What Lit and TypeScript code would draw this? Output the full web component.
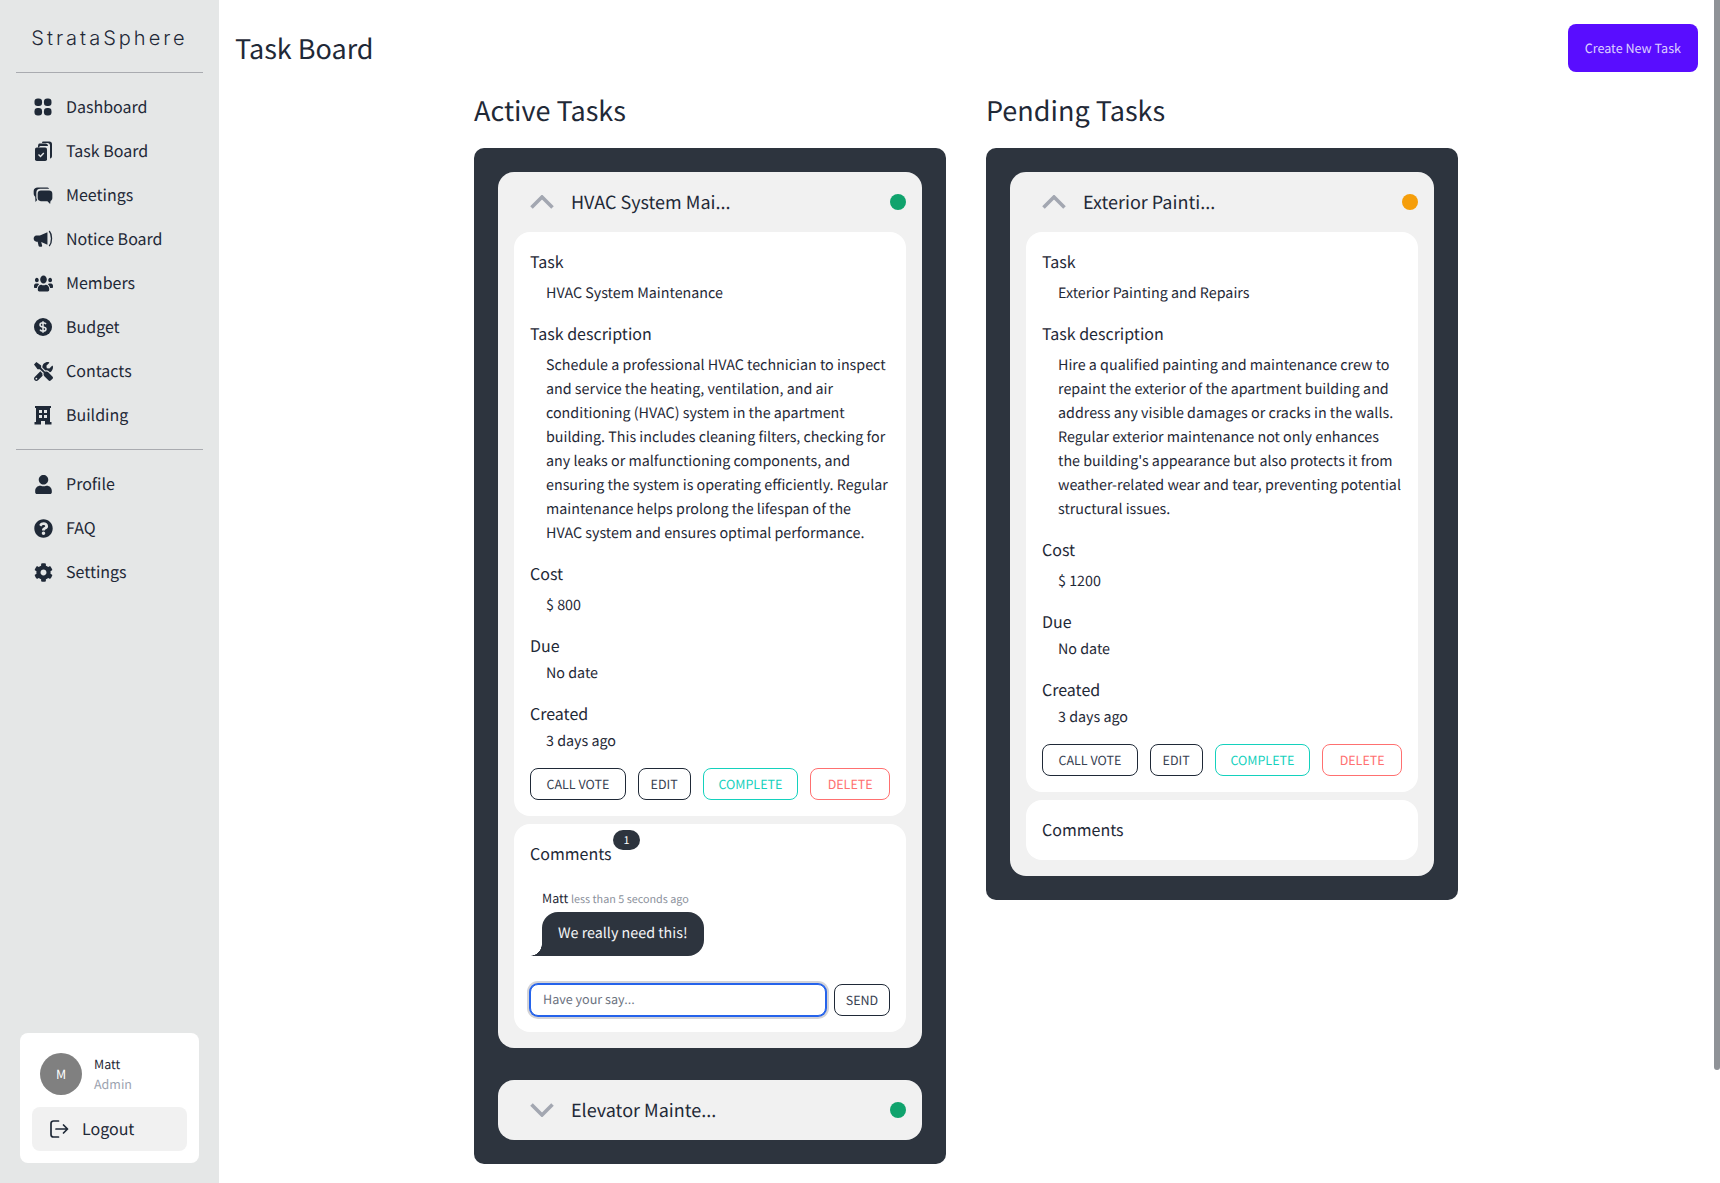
import { css, html, LitElement, svg } from 'lit'
import { customElement, property } from 'lit/decorators.js'

const SIDE_BG = '#e5e7e7'

const icons: Record<string, unknown> = {
  dashboard: html`<svg viewBox="-0.700 -0.700 25.400 25.400"><rect x="3" y="3" width="8" height="8" rx="3.400"/><rect x="13" y="3" width="8" height="8" rx="3.400"/><rect x="3" y="13" width="8" height="8" rx="3.400"/><rect x="13" y="13" width="8" height="8" rx="3.400"/></svg>`,
  tasks: html`<svg viewBox="0 0 24 24"><path d="M12 2.500h6.500c1.500 0 2.500 1 2.500 2.500v12c0 1.300-.7 2.300-2 2.500V6.500c0-1.500-1-2.500-2.500-2.500H11c.1-.8.4-1.500 1-1.500z"/><path d="M8.500 4.500h6c1.500 0 2.500 1 2.500 2.500H10c-1 0-2 .5-2 1.500H7c0-2 .2-4 1.500-4z"/><rect x="4" y="8.500" width="12" height="13.500" rx="1.800"/><path d="M7.500 15.500l2 2 3.300-3.500" fill="none" stroke=${SIDE_BG} stroke-width="1.400"/></svg>`,
  meetings: html`<svg viewBox="-1.500 -1.500 27 27"><path d="M6 3.500h10c1.400 0 2.500.6 3 1.500H9c-3 0-4.500 1.800-4.500 4.500v5c0 1.300.3 2.400 1 3.200L3.500 20l-.3-6C2 13 1.500 11.500 1.500 10V7.500c0-2.500 2-4 4.500-4z"/><path d="M9.500 7h9.500c2 0 3.500 1.300 3.500 3.500v5c0 1.500-.8 2.800-2 3.300l-.5 3.200-3-3H9.500C7.500 19 6 17.500 6 15.500v-5C6 8.300 7.500 7 9.500 7z"/></svg>`,
  notice: html`<svg viewBox="-1.500 -1.500 27 27"><path d="M17 4.500L8.500 8H4.500C2.800 8 1.500 9.500 1.500 11.500S2.800 15 4.500 15H6l1 4.500c.2.800.7 1.200 1.500 1.200h1.500c.8 0 1.200-.7 1-1.400L10 15.500l7 3z"/><path d="M19 3c1.800 2 2.600 5.300 2.600 8.500S20.800 18 19 20" fill="none" stroke="currentColor" stroke-width="1.500"/></svg>`,
  members: html`<svg class="stretched" viewBox="0 20 640 472" preserveAspectRatio="none"><path d="M96 224c35.300 0 64-28.700 64-64s-28.700-64-64-64-64 28.700-64 64 28.700 64 64 64zm448 0c35.300 0 64-28.700 64-64s-28.700-64-64-64-64 28.700-64 64 28.700 64 64 64zm32 32h-64c-17.600 0-33.500 7.100-45.100 18.600 40.300 22.100 68.900 62 75.100 109.400h66c17.700 0 32-14.300 32-32v-32c0-35.300-28.700-64-64-64zm-256 0c61.900 0 112-50.100 112-112S381.900 32 320 32 208 82.100 208 144s50.100 112 112 112zm76.800 32h-8.300c-20.800 10-43.900 16-68.500 16s-47.600-6-68.500-16h-8.300C179.600 288 128 339.600 128 403.200V432c0 26.500 21.500 48 48 48h288c26.500 0 48-21.500 48-48v-28.800c0-63.600-51.600-115.200-115.200-115.200zm-223.700-13.400C161.500 263.100 145.600 256 128 256H64c-35.300 0-64 28.700-64 64v32c0 17.700 14.300 32 32 32h65.900c6.300-47.400 34.900-87.300 75.200-109.400z"/></svg>`,
  budget: html`<svg viewBox="0 0 24 24"><circle cx="12" cy="12" r="9"/><path d="M15 9.200c-.5-1-1.600-1.400-3-1.400-1.700 0-3 .8-3 2.100 0 2.900 6 1.400 6 4.200 0 1.300-1.300 2.100-3 2.100-1.400 0-2.500-.5-3-1.500M12 6.200v11.600" fill="none" stroke=${SIDE_BG} stroke-width="1.500"/></svg>`,
  contacts: html`<svg viewBox="0 0 512 512"><path d="M501.100 395.700L384 278.600c-23.100-23.100-57.600-27.600-85.400-13.900L192 158.100V96L64 0 0 64l96 128h62.100l106.600 106.600c-13.600 27.800-9.200 62.300 13.900 85.400l117.100 117.100c14.600 14.600 38.200 14.600 52.700 0l52.700-52.700c14.500-14.600 14.500-38.200 0-52.700zM331.700 225c28.300 0 54.900 11 74.900 31l19.400 19.400c15.800-6.900 30.800-16.500 43.800-29.500 37.100-37.100 49.700-89.300 37.900-136.700-2.200-9-13.500-12.100-20.100-5.500l-74.400 74.400-67.900-11.300L334 98.900l74.400-74.400c6.600-6.600 3.400-17.900-5.700-20.200-47.400-11.700-99.600.9-136.600 37.900-28.500 28.500-41.900 66.100-41.200 103.600l82.100 82.100c8.100-1.900 16.500-2.900 24.700-2.900zm-103.900 82l-56.700-56.700L18.700 402.800c-25 25-25 65.500 0 90.500s65.500 25 90.500 0l123.600-123.600c-7.600-19.900-9.900-41.600-5-62.700zM64 472c-13.200 0-24-10.800-24-24 0-13.300 10.700-24 24-24s24 10.700 24 24c0 13.200-10.700 24-24 24z"/></svg>`,
  building: html`<svg viewBox="0 0 24 24"><path fill-rule="evenodd" d="M4 3h16v2h-1v14h1.500v2.500H14V18h-4v3.500H3.500V19H5V5H4zM8 7v3h3V7zm5 0v3h3V7zM8 12v3h3v-3zm5 0v3h3v-3z"/></svg>`,
  profile: html`<svg viewBox="0 0 448 512"><path d="M224 256c70.700 0 128-57.300 128-128S294.700 0 224 0 96 57.300 96 128s57.300 128 128 128zm89.600 32h-16.700c-22.200 10.200-46.900 16-72.900 16s-50.600-5.800-72.900-16h-16.700C60.200 288 0 348.200 0 422.400V464c0 26.500 21.500 48 48 48h352c26.500 0 48-21.500 48-48v-41.600c0-74.200-60.200-134.400-134.400-134.400z"/></svg>`,
  faq: html`<svg viewBox="0 0 512 512"><path d="M504 256c0 136.997-111.043 248-248 248S8 392.997 8 256C8 119.083 119.043 8 256 8s248 111.083 248 248zM262.655 90c-54.497 0-89.255 22.957-116.549 63.758-3.536 5.286-2.353 12.415 2.715 16.258l34.699 26.310c5.205 3.947 12.621 3.008 16.665-2.122 17.864-22.658 30.113-35.797 57.303-35.797 20.429 0 45.698 13.148 45.698 32.958 0 14.976-12.363 22.667-32.534 33.976C247.128 238.528 216 254.941 216 296v4c0 6.627 5.373 12 12 12h56c6.627 0 12-5.373 12-12v-1.333c0-28.462 83.186-29.647 83.186-106.667 0-58.002-60.165-102-116.531-102zM256 338c-25.365 0-46 20.635-46 46 0 25.364 20.635 46 46 46s46-20.636 46-46c0-25.365-20.635-46-46-46z"/></svg>`,
  settings: html`<svg viewBox="0 0 512 512"><path d="M487.400 315.700l-42.600-24.600c4.300-23.200 4.300-47 0-70.200l42.600-24.600c4.900-2.800 7.100-8.600 5.500-14-11.100-35.600-30-67.800-54.700-94.600-3.800-4.100-10-5.100-14.800-2.300L380.800 110c-17.900-15.400-38.500-27.300-60.800-35.100V25.800c0-5.600-3.900-10.500-9.400-11.700-36.700-8.200-74.300-7.800-109.200 0-5.500 1.200-9.400 6.100-9.400 11.700V75c-22.200 7.900-42.800 19.800-60.800 35.100L88.700 85.500c-4.900-2.800-11-1.900-14.800 2.300-24.700 26.700-43.600 58.900-54.700 94.600-1.700 5.400.6 11.200 5.500 14L67.300 221c-4.300 23.200-4.300 47 0 70.200l-42.600 24.600c-4.900 2.800-7.100 8.600-5.500 14 11.100 35.600 30 67.800 54.700 94.600 3.800 4.100 10 5.100 14.800 2.300l42.600-24.600c17.900 15.400 38.500 27.300 60.800 35.100v49.200c0 5.600 3.900 10.500 9.400 11.700 36.700 8.200 74.300 7.800 109.200 0 5.500-1.200 9.400-6.100 9.400-11.700v-49.200c22.200-7.900 42.800-19.800 60.800-35.100l42.600 24.600c4.900 2.800 11 1.900 14.800-2.300 24.700-26.700 43.600-58.900 54.700-94.600 1.500-5.500-.7-11.300-5.600-14.100zM256 336c-44.100 0-80-35.900-80-80s35.900-80 80-80 80 35.900 80 80-35.900 80-80 80z"/></svg>`,
}

const chevron = (open: boolean) => html`<svg class="chevron" viewBox="0 0 24 14">
  ${svg`<path d=${open ? 'M1.500 12.500L12 2l10.500 10.500' : 'M1.500 1.500L12 12 22.500 1.500'} fill="none" stroke="#a3a7b1" stroke-width="3.600"/>`}
</svg>`

const logoutIcon = html`<svg class="logout-icon" viewBox="0 0 20 20" fill="none" stroke="currentColor" stroke-width="1.700" stroke-linecap="round" stroke-linejoin="round">
  <path d="M9.500 2H4.500C3 2 2 3 2 4.500v11C2 17 3 18 4.500 18h5"/><path d="M7 10h11.500M14.500 6l4 4-4 4"/>
</svg>`

type Field = { label: string; value: string; tight?: boolean }
type Task = {
  title: string
  short: string
  color: string
  description?: string
  cost?: string
  comments?: { name: string; when: string; text: string }[]
}

const topLinks = [
  ['dashboard', 'Dashboard'],
  ['tasks', 'Task Board'],
  ['meetings', 'Meetings'],
  ['notice', 'Notice Board'],
  ['members', 'Members'],
  ['budget', 'Budget'],
  ['contacts', 'Contacts'],
  ['building', 'Building'],
]
const bottomLinks = [
  ['profile', 'Profile'],
  ['faq', 'FAQ'],
  ['settings', 'Settings'],
]

const activeTasks: Task[] = [
  {
    title: 'HVAC System Maintenance',
    short: 'HVAC System Mai...',
    color: '#10a36d',
    description:
      'Schedule a professional HVAC technician to inspect and service the heating, ventilation, and air conditioning (HVAC) system in the apartment building. This includes cleaning filters, checking for any leaks or malfunctioning components, and ensuring the system is operating efficiently. Regular maintenance helps prolong the lifespan of the HVAC system and ensures optimal performance.',
    cost: '$ 800',
    comments: [{ name: 'Matt', when: 'less than 5 seconds ago', text: 'We really need this!' }],
  },
  { title: 'Elevator Maintenance', short: 'Elevator Mainte...', color: '#10a36d' },
]

const pendingTasks: Task[] = [
  {
    title: 'Exterior Painting and Repairs',
    short: 'Exterior Painti...',
    color: '#f59e0b',
    description:
      "Hire a qualified painting and maintenance crew to repaint the exterior of the apartment building and address any visible damages or cracks in the walls. Regular exterior maintenance not only enhances the building's appearance but also protects it from weather-related wear and tear, preventing potential structural issues.",
    cost: '$ 1200',
  },
]

@customElement('task-card')
class TaskCard extends LitElement {
  static styles = css`
    :host {
      display: block;
    }
    .card {
      background: #f1f1f1;
      border-radius: 16px;
    }
    .head {
      height: 60px;
      display: flex;
      align-items: center;
      padding: 0 16px 0 32px;
    }
    .chevron {
      width: 24px;
      height: 14px;
      flex: none;
    }
    .title {
      flex: 1;
      margin-left: 17px;
      font-size: 18px;
      line-height: 28px;
    }
    .dot {
      width: 16px;
      height: 16px;
      border-radius: 50%;
    }
    .body {
      padding: 0 16px 16px;
      display: flex;
      flex-direction: column;
      gap: 8px;
    }
    .panel {
      background: #fff;
      border-radius: 16px;
      padding: 16px;
    }
    .label {
      font-size: 16px;
      line-height: 26px;
    }
    .value {
      font-size: 14.300px;
      line-height: 24px;
      padding-left: 16px;
      margin: 7px 0 15px;
    }
    .value.tight {
      margin-top: 3px;
    }
    .actions {
      display: flex;
      gap: 12px;
    }
    button {
      height: 32px;
      box-sizing: border-box;
      padding: 0 0 2px;
      background: #fff;
      border: 1px solid #1f2937;
      border-radius: 8px;
      color: #374151;
      font: inherit;
      font-size: 12.500px;
      text-rendering: inherit;
      text-transform: uppercase;
      white-space: nowrap;
    }
    button.vote,
    button.complete {
      width: 96px;
    }
    button.edit {
      width: 53px;
    }
    button.complete {
      border-color: #14d1bd;
      color: #14d1bd;
    }
    button.delete {
      width: 80px;
      border-color: #ff7070;
      color: #ff7070;
    }
    .comments-label {
      display: inline-block;
      position: relative;
      margin-bottom: 2px;
    }
    .badge {
      position: absolute;
      left: 83px;
      top: -10px;
      width: 27px;
      height: 20px;
      border-radius: 10px;
      background: #2d343e;
      color: #fff;
      font-size: 10.800px;
      line-height: 20px;
      text-align: center;
    }
    .meta {
      margin: 20px 0 0 12px;
      font-size: 12.500px;
      line-height: 20px;
    }
    .meta span {
      color: #8b919c;
      font-size: 10.800px;
    }
    .bubble {
      position: relative;
      display: inline-block;
      margin: 3px 0 0 12px;
      padding: 9px 16px 11px;
      background: #2d343e;
      color: #f3f4f6;
      border-radius: 16px 16px 16px 0;
      font-size: 14.300px;
      line-height: 24px;
    }
    .bubble::before {
      content: '';
      position: absolute;
      left: -12px;
      bottom: 0;
      width: 12px;
      height: 12px;
      background: radial-gradient(circle at 0 0, transparent 11.500px, #2d343e 12px);
    }
    .say {
      display: flex;
      gap: 8px;
      margin-top: 28px;
    }
    input {
      flex: 1;
      min-width: 0;
      height: 32px;
      box-sizing: border-box;
      padding: 0 12px 4px;
      border: 1px solid #2563eb;
      border-radius: 8px;
      box-shadow: 0 0 0 1px #2563eb, 0 0 0 3px #d4d4d8;
      outline: none;
      color: #1f2937;
      font: inherit;
      font-size: 12.600px;
      text-rendering: inherit;
    }
    input::placeholder {
      color: #6b7280;
    }
    .say button {
      width: 56px;
    }
  `

  @property({ attribute: false }) task!: Task

  render() {
    const t = this.task
    const open = !!t.description
    return html`
      <div class="card">
        <div class="head">
          ${chevron(open)}
          <div class="title">${t.short}</div>
          <div class="dot" style="background: ${t.color}"></div>
        </div>
        ${open ? this.renderBody(t) : ''}
      </div>
    `
  }

  renderBody(t: Task) {
    const fields: Field[] = [
      { label: 'Task', value: t.title },
      { label: 'Task description', value: t.description! },
      { label: 'Cost', value: t.cost! },
      { label: 'Due', value: 'No date', tight: true },
      { label: 'Created', value: '3 days ago', tight: true },
    ]
    const comments = t.comments || []
    return html`
      <div class="body">
        <div class="panel">
          ${fields.map(
            (f) => html`
              <div class="label">${f.label}</div>
              <div class="value ${f.tight ? 'tight' : ''}">${f.value}</div>
            `
          )}
          <div class="actions">
            <button class="vote">Call vote</button>
            <button class="edit">Edit</button>
            <button class="complete">Complete</button>
            <button class="delete">Delete</button>
          </div>
        </div>
        <div class="panel">
          <div class="label comments-label">
            Comments ${comments.length ? html`<span class="badge">${comments.length}</span>` : ''}
          </div>
          ${comments.map(
            (c) => html`
              <div class="meta">${c.name} <span>${c.when}</span></div>
              <div class="bubble">${c.text}</div>
              <div class="say">
                <input placeholder="Have your say..." />
                <button>Send</button>
              </div>
            `
          )}
        </div>
      </div>
    `
  }
}

@customElement('app-root')
export class AppRoot extends LitElement {
  static styles = css`
    :host {
      display: flex;
      position: relative;
      height: 100vh;
      overflow: hidden;
      background: #fff;
      color: #1f2937;
      font-family: 'Noto Sans CJK JP', 'Noto Sans', sans-serif;
      text-rendering: geometricPrecision;
    }
    .side {
      width: 219px;
      flex: none;
      box-sizing: border-box;
      display: flex;
      flex-direction: column;
      padding: 0 16px 20px;
      background: #e5e7e7;
    }
    .logo {
      height: 73px;
      box-sizing: border-box;
      padding-top: 24px;
      border-bottom: 1px solid #a9abb0;
      font-family: Inter, sans-serif;
      font-size: 20px;
      font-weight: 300;
      line-height: 28px;
      letter-spacing: 3px;
      text-align: center;
      white-space: nowrap;
    }
    nav {
      padding: 12px 0;
    }
    nav + nav {
      border-top: 1px solid #a9abb0;
    }
    .link {
      height: 44px;
      display: flex;
      align-items: center;
      gap: 11px;
      padding-left: 15px;
      font-size: 16px;
    }
    .link-text,
    .logout-text {
      margin-bottom: 2px;
    }
    .icon {
      width: 24px;
      height: 24px;
      flex: none;
      display: flex;
      align-items: center;
      justify-content: center;
    }
    .icon svg {
      width: 24px;
      height: 24px;
      fill: currentColor;
      color: #1f2937;
    }
    .icon svg[viewBox^='0 0 512'],
    .icon svg[viewBox^='0 0 448'] {
      width: 19px;
      height: 19px;
    }
    .icon svg.stretched {
      width: 19px;
      height: 17px;
    }
    .user {
      margin: auto 4px 0;
      height: 130px;
      box-sizing: border-box;
      padding: 20px 12px 12px;
      background: #fff;
      border-radius: 8px;
      display: flex;
      flex-direction: column;
    }
    .who {
      display: flex;
      gap: 12px;
      padding-left: 8px;
    }
    .avatar {
      width: 42px;
      height: 42px;
      border-radius: 50%;
      background: #808080;
      color: #fff;
      font-size: 12.500px;
      line-height: 42px;
      text-align: center;
    }
    .name {
      font-size: 12.500px;
      line-height: 20px;
      margin-top: 1px;
    }
    .role {
      font-size: 12.500px;
      line-height: 20px;
      color: #9ca3af;
    }
    .logout {
      margin-top: 12px;
      height: 44px;
      display: flex;
      align-items: center;
      gap: 13px;
      padding-left: 17px;
      background: #f1f1f1;
      border-radius: 8px;
      font-size: 16px;
    }
    .logout-icon {
      width: 20px;
      height: 20px;
    }
    main {
      flex: 1;
      min-width: 0;
      margin-right: 6px;
      padding: 24px 16px 0;
    }
    .top {
      display: flex;
      align-items: center;
      justify-content: space-between;
      height: 48px;
    }
    h1 {
      margin: 0;
      font-size: 27px;
      font-weight: 400;
      line-height: 36px;
    }
    .create {
      height: 48px;
      padding: 0 17px 2px;
      border: 0;
      border-radius: 8px;
      background: #590dff;
      color: #dcd0ff;
      font: inherit;
      font-size: 12.600px;
      text-rendering: inherit;
    }
    .columns {
      display: flex;
      justify-content: center;
      gap: 40px;
      margin: 20px 1px 0 0;
    }
    .column {
      width: 472px;
    }
    h2 {
      margin: 0 0 20px;
      font-size: 27px;
      font-weight: 400;
      line-height: 36px;
    }
    .box {
      padding: 24px;
      background: #2d343e;
      border-radius: 10px;
      display: flex;
      flex-direction: column;
      gap: 32px;
    }
    .thumb {
      position: absolute;
      top: 0;
      right: 0;
      width: 6px;
      height: 1070px;
      border-radius: 0 0 3px 3px;
      background: #8f9297;
    }
  `

  renderLink([icon, label]: string[]) {
    return html`<div class="link"><span class="icon">${icons[icon]}</span><span class="link-text">${label}</span></div>`
  }

  renderColumn(title: string, tasks: Task[]) {
    return html`
      <section class="column">
        <h2>${title}</h2>
        <div class="box">${tasks.map((t) => html`<task-card .task=${t}></task-card>`)}</div>
      </section>
    `
  }

  render() {
    return html`
      <aside class="side">
        <div class="logo">StrataSphere</div>
        <nav>${topLinks.map((l) => this.renderLink(l))}</nav>
        <nav>${bottomLinks.map((l) => this.renderLink(l))}</nav>
        <div class="user">
          <div class="who">
            <div class="avatar">M</div>
            <div>
              <div class="name">Matt</div>
              <div class="role">Admin</div>
            </div>
          </div>
          <div class="logout">${logoutIcon}<span class="logout-text">Logout</span></div>
        </div>
      </aside>
      <main>
        <div class="top">
          <h1>Task Board</h1>
          <button class="create">Create New Task</button>
        </div>
        <div class="columns">
          ${this.renderColumn('Active Tasks', activeTasks)}
          ${this.renderColumn('Pending Tasks', pendingTasks)}
        </div>
      </main>
      <div class="thumb"></div>
    `
  }
}
